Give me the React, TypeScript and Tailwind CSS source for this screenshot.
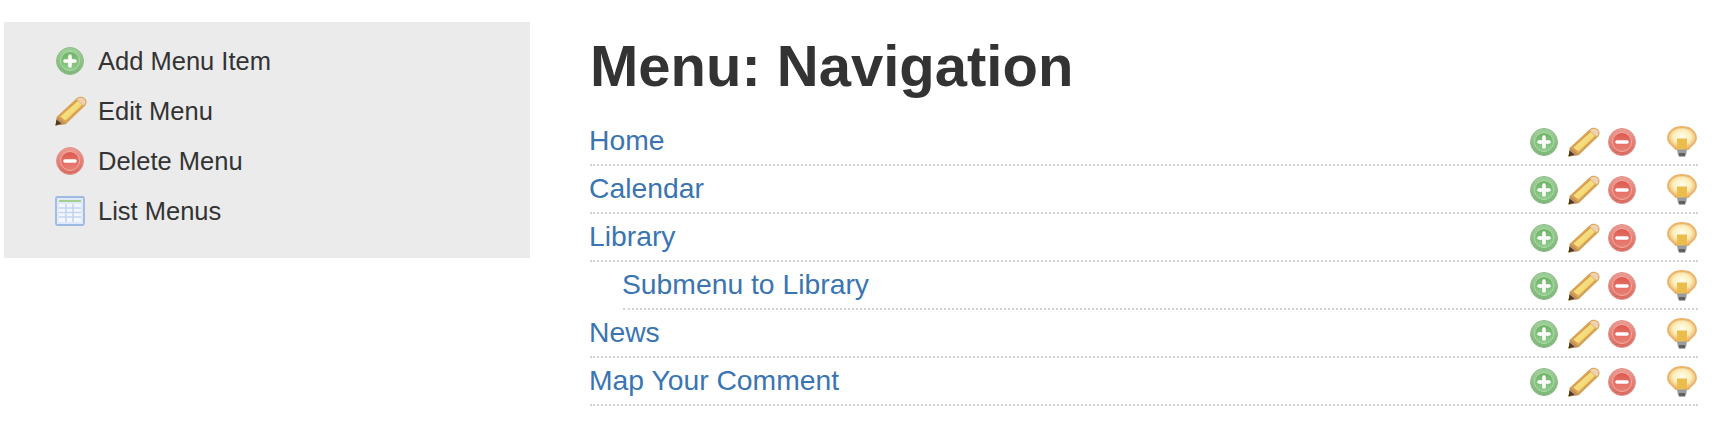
const sideLinks = [
  { label: "Add Menu Item", icon: "add" },
  { label: "Edit Menu", icon: "edit" },
  { label: "Delete Menu", icon: "delete" },
  { label: "List Menus", icon: "list" },
];

const menuItems = [
  { label: "Home", sub: false },
  { label: "Calendar", sub: false },
  { label: "Library", sub: false },
  { label: "Submenu to Library", sub: true },
  { label: "News", sub: false },
  { label: "Map Your Comment", sub: false },
];

function IconDefs() {
  return (
    <svg width="0" height="0" className="absolute">
      <defs>
        <linearGradient id="greenFill" x1="0" y1="0" x2="0" y2="1">
          <stop offset="0" stopColor="#9fd099" />
          <stop offset="1" stopColor="#7db577" />
        </linearGradient>
        <linearGradient id="greenInner" x1="0" y1="0" x2="0" y2="1">
          <stop offset="0" stopColor="#6fb369" />
          <stop offset="1" stopColor="#92cc8b" />
        </linearGradient>
        <linearGradient id="redFill" x1="0" y1="0" x2="0" y2="1">
          <stop offset="0" stopColor="#ee9c93" />
          <stop offset="1" stopColor="#d9685e" />
        </linearGradient>
        <linearGradient id="redInner" x1="0" y1="0" x2="0" y2="1">
          <stop offset="0" stopColor="#dc5b50" />
          <stop offset="1" stopColor="#ea8176" />
        </linearGradient>
        <linearGradient id="pencilFill" x1="0" y1="0" x2="1" y2="1">
          <stop offset="0" stopColor="#fbeb9a" />
          <stop offset="1" stopColor="#f0ce5c" />
        </linearGradient>
        <radialGradient id="bulbFill" cx="0.5" cy="0.45" r="0.55">
          <stop offset="0" stopColor="#fffef0" />
          <stop offset="0.55" stopColor="#fdf0bd" />
          <stop offset="1" stopColor="#efb25f" />
        </radialGradient>
      </defs>
    </svg>
  );
}

function AddIcon() {
  return (
    <svg width="30" height="30" viewBox="0 0 30 30" className="shrink-0 blur-[0.6px]">
      <circle cx="15" cy="15" r="13.5" fill="url(#greenFill)" stroke="#8dbd88" strokeWidth="1" />
      <circle cx="15" cy="15" r="9.5" fill="url(#greenInner)" stroke="#b0dcab" strokeWidth="1" />
      <path d="M15 10v10M10 15h10" stroke="#ffffff" strokeWidth="3.6" strokeLinecap="round" />
    </svg>
  );
}

function DeleteIcon() {
  return (
    <svg width="30" height="30" viewBox="0 0 30 30" className="shrink-0 blur-[0.6px]">
      <circle cx="15" cy="15" r="13.5" fill="url(#redFill)" stroke="#de948c" strokeWidth="1" />
      <circle cx="15" cy="15" r="9.5" fill="url(#redInner)" stroke="#f2aca4" strokeWidth="1" />
      <path d="M10 15h10" stroke="#ffffff" strokeWidth="3.6" strokeLinecap="round" />
    </svg>
  );
}

function EditIcon() {
  return (
    <svg width="32" height="30" viewBox="0 0 32 30" className="shrink-0 blur-[0.6px]">
      <path d="M0.500 29.500l1.500-9L22 2c2.500-2 6-1.500 8 .5s2 5 .3 7L11 28z" fill="#d9a355" />
      <path d="M5.500 20.500L23 5l4 4L10.500 24.500z" fill="url(#pencilFill)" />
      <path d="M23 2.500c2-1.300 4.700-1 6.200.6s1.700 4 .4 5.400l-1.200 1-6.600-6z" fill="#efd0b0" />
      <path d="M0.500 29.500l1.500-9 9 7.500z" fill="#bd9060" />
      <path d="M0.500 29.500l1-6 5 4.300z" fill="#4f3a1e" />
    </svg>
  );
}

function ListIcon() {
  return (
    <svg width="30" height="30" viewBox="0 0 30 30" className="shrink-0 blur-[0.5px]">
      <rect x="1" y="1" width="28" height="28" rx="1.500" fill="#dfe9f7" stroke="#9dbae3" strokeWidth="1.800" />
      <rect x="4" y="4" width="22" height="2" fill="#a5cf8e" />
      <rect x="4" y="8" width="22" height="18" fill="#f3f7fc" />
      <path d="M4 12h22M4 16.500h22M4 21h22M11 8v18M18 8v18" stroke="#c3d5ef" strokeWidth="1.600" />
    </svg>
  );
}

function BulbIcon() {
  return (
    <svg width="30" height="32" viewBox="0 0 30 32" className="shrink-0 blur-[0.6px]">
      <path d="M15 1C7 1 1 5.500 1 12.500c0 4.500 5 7 7.500 10.500h13c2.500-3.500 7.500-6 7.500-10.500C29 5.500 23 1 15 1z" fill="url(#bulbFill)" stroke="#ebb46c" strokeWidth="1.800" />
      <rect x="10" y="12.500" width="10" height="11" fill="#ecbd4c" />
      <path d="M10 23.500h10l-1 6h-8z" fill="#9a9da0" />
      <rect x="12" y="27" width="6" height="3.500" fill="#5f6264" />
    </svg>
  );
}

function SideIcon({ name }: { name: string }) {
  if (name === "add") return <AddIcon />;
  if (name === "edit") return <EditIcon />;
  if (name === "delete") return <DeleteIcon />;
  return <ListIcon />;
}

export default function App() {
  return (
    <div className="flex h-[430px] items-start bg-white pl-[4px] pt-[22px] font-['Liberation_Sans',Arial,sans-serif] text-[#333]">
      <IconDefs />
      <div className="flex h-[236px] w-[526px] shrink-0 flex-col gap-[20px] bg-[#ebebeb] pl-[51px] pt-[24px]">
        {sideLinks.map((link) => (
          <div key={link.label} className="flex h-[30px] items-center">
            <div className="w-[43px]">
              <SideIcon name={link.icon} />
            </div>
            <span className="text-[25.5px] leading-[30px]">{link.label}</span>
          </div>
        ))}
      </div>
      <div className="ml-[60px] w-[1108px] shrink-0">
        <h1 className="mt-[11px] text-[58px] font-bold leading-[66px] text-[#333]">Menu: Navigation</h1>
        <ul className="mt-[19px]">
          {menuItems.map((item) => (
            <li
              key={item.label}
              className={`flex h-[48px] items-center justify-between border-b-2 border-dotted border-[#d2d2d2] ${item.sub ? "ml-[33px]" : ""}`}
            >
              <a className="-ml-px pb-[2px] text-[28.3px] leading-[40px] text-[#3a75b2]">{item.label}</a>
              <div className="flex items-center pt-[2px] pr-[1px]">
                <AddIcon />
                <div className="ml-[9px]"><EditIcon /></div>
                <div className="ml-[7px]"><DeleteIcon /></div>
                <div className="ml-[30px]"><BulbIcon /></div>
              </div>
            </li>
          ))}
        </ul>
      </div>
    </div>
  );
}
